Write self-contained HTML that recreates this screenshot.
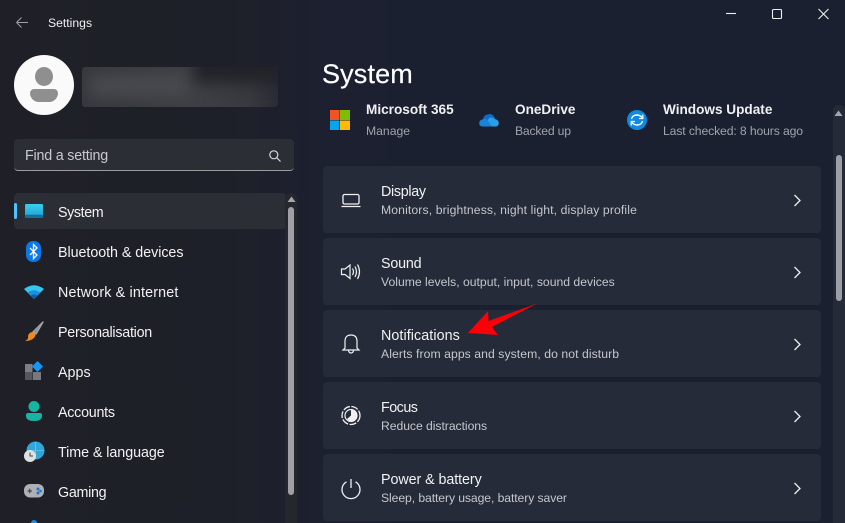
<!DOCTYPE html>
<html><head><meta charset="utf-8"><style>
html,body{margin:0;padding:0}
body{width:845px;height:523px;overflow:hidden;position:relative;background:#1b2030;font-family:"Liberation Sans",sans-serif;color:#fff}
.a{position:absolute}
.t{position:absolute;white-space:nowrap;line-height:18px}
.left{left:0;top:0;width:420px;height:523px;background:linear-gradient(90deg,#1f2027 0,#1e2029 55%,#1c2030 78%,#1b2030 100%)}
.card{position:absolute;left:323px;width:498px;height:67px;background:#262b39;border-radius:4px}
.nav{font-size:14.3px;left:58px;color:#f2f2f2}
.h{font-size:14.3px;left:381px;color:#f2f2f2}
.s{font-size:12.2px;left:381px;color:#c4c6cc}
.qh{font-size:13.6px;font-weight:bold;color:#f0f0f2}
.qs{font-size:12.2px;color:#a0a3ab}
svg{position:absolute;overflow:visible}
</style></head><body>
<div class="a left"></div>

<svg style="left:14px;top:14px" width="16" height="16" fill="none" stroke="#a0a1a5" stroke-width="1"><path d="M2.500 8.500H14M2.500 8.500L7.500 3.500M2.500 8.500L7.500 13.500"/></svg>
<div class="t" style="left:48px;top:14px;font-size:12.2px;color:#f0f0f0">Settings</div>

<svg style="left:720px;top:0" width="125" height="30" fill="none" stroke="#eee" stroke-width="1.100"><path d="M6 13.500H16"/><rect x="52.500" y="9.500" width="9" height="9" rx="1"/><path d="M98.500 9L108.500 19M108.500 9L98.500 19"/></svg>

<div class="a" style="left:14px;top:55px;width:60px;height:60px;border-radius:50%;background:#fafafa"></div>
<div class="a" style="left:35px;top:67px;width:18px;height:19px;border-radius:50%;background:#8f8f8f"></div>
<div class="a" style="left:30px;top:89px;width:28px;height:13px;border-radius:6px 6px 13px 13px;background:#8f8f8f"></div>
<div class="a" style="left:82px;top:67px;width:196px;height:40px;border-radius:3px;background:linear-gradient(90deg,#37383d 0,#3e3f44 60%,#38393f 85%,#2a2c35 100%);overflow:hidden">
  <div class="a" style="left:8px;top:8px;width:100px;height:22px;background:#48494e;filter:blur(7px)"></div>
  <div class="a" style="left:112px;top:-16px;width:110px;height:32px;background:#212329;filter:blur(7px)"></div>
</div>

<div class="a" style="left:14px;top:139px;width:280px;height:31px;background:#2c2e36;border-radius:4px;border-bottom:1.500px solid #9b9ca0"></div>
<div class="t" style="left:25px;top:147px;font-size:14.3px;color:#c9cacd;letter-spacing:-.2px">Find a setting</div>
<svg style="left:269px;top:150px" width="14" height="14" fill="none" stroke="#d8d8d8" stroke-width="1.200"><circle cx="4.800" cy="4.800" r="4"/><path d="M7.800 7.800L11.500 11.500"/></svg>

<div class="a" style="left:14px;top:193px;width:272px;height:36px;background:#2c2e36;border-radius:4px"></div>
<div class="a" style="left:14px;top:203px;width:3px;height:16px;background:#4cc2ff;border-radius:2px"></div>

<div class="a" style="left:285px;top:193px;width:12px;height:330px;background:#25272e;border-radius:6px 6px 0 0"></div>
<svg style="left:287px;top:196px" width="9" height="7"><path d="M4.500 .5L8.500 6H.5Z" fill="#a5a6aa"/></svg>
<div class="a" style="left:288px;top:207px;width:6px;height:288px;background:#9f9fa4;border-radius:3px"></div>

<svg style="left:25px;top:204px" width="18" height="14"><defs><linearGradient id="g1" x1="0" y1="0" x2="0" y2="1"><stop offset="0" stop-color="#3ad0ea"/><stop offset="1" stop-color="#1d9dd6"/></linearGradient></defs><rect width="18" height="14" rx="1.500" fill="url(#g1)"/><rect y="10.800" width="18" height="3.200" rx="1" fill="#0f6f9f"/></svg>
<div class="t nav" style="top:204px;letter-spacing:-.4px">System</div>

<svg style="left:26px;top:241px" width="15" height="21"><rect width="15" height="21" rx="7" fill="#0b78e8"/><path d="M4 7L11 14L7.500 17.500V3.500L11 7L4 14" fill="none" stroke="#fff" stroke-width="1.300"/></svg>
<div class="t nav" style="top:244px;letter-spacing:-.05px">Bluetooth &amp; devices</div>

<svg style="left:24px;top:284px" width="20" height="15"><path d="M0 5Q10 -2.500 20 5L10 15Z" fill="#36c5f0"/><path d="M4 8.500Q10 4 16 8.500L10 15Z" fill="#1b8fdc"/><path d="M7 11.500Q10 9.500 13 11.500L10 15Z" fill="#0b5fb8"/></svg>
<div class="t nav" style="top:284px;letter-spacing:.16px">Network &amp; internet</div>

<svg style="left:24px;top:321px" width="20" height="21"><path d="M19 1L12 13L9 11Z" fill="#8a8d92" stroke="#a0a2a6" stroke-width="1.500" stroke-linejoin="round"/><path d="M8 11Q11 12 11.500 14.500Q9 20 1 20Q5 18 4 15Q4.500 12 8 11Z" fill="#ee8a25"/></svg>
<div class="t nav" style="top:324px;letter-spacing:-.25px">Personalisation</div>

<svg style="left:25px;top:361px" width="18" height="19"><rect x="0" y="3" width="7.500" height="8" fill="#7d7f84"/><rect x="0" y="11" width="7.500" height="8" fill="#55575c"/><rect x="8" y="11" width="8" height="8" fill="#77797e"/><path d="M12.500 0L18 5.500L12.500 11L7 5.500Z" fill="#1a94ef"/></svg>
<div class="t nav" style="top:364px">Apps</div>

<svg style="left:26px;top:401px" width="16" height="21"><circle cx="8" cy="5.500" r="5.500" fill="#17b3a3"/><path d="M0 14Q0 12 2 12H14Q16 12 16 14V15Q16 20 8 20Q0 20 0 15Z" fill="#17b3a3"/></svg>
<div class="t nav" style="top:404px;letter-spacing:-.25px">Accounts</div>

<svg style="left:24px;top:441px" width="21" height="21"><circle cx="11.500" cy="9.500" r="9" fill="#2fa7dd"/><path d="M11.500 1V18M3 9.500H20" stroke="#7fd0ee" stroke-width=".6"/><circle cx="6" cy="15" r="6" fill="#dfe0e2"/><path d="M6 11.500V15H9" fill="none" stroke="#444" stroke-width="1"/></svg>
<div class="t nav" style="top:444px;letter-spacing:-.06px">Time &amp; language</div>

<svg style="left:24px;top:484px" width="20" height="14"><rect width="20" height="13.500" rx="6" fill="#aeb0b5"/><path d="M3.500 7H8M5.750 4.800V9.200" stroke="#333" stroke-width="1"/><circle cx="14" cy="5" r="1.500" fill="#1b74d0"/><circle cx="14" cy="9" r="1.500" fill="#1b74d0"/><circle cx="16.500" cy="7" r="1.300" fill="#1b74d0"/></svg>
<div class="t nav" style="top:484px;letter-spacing:-.3px">Gaming</div>

<div class="a" style="left:31px;top:520px;width:6px;height:3px;background:#1b8fdc;border-radius:3px 3px 0 0"></div>

<div class="t" style="left:322px;top:58px;font-size:27px;line-height:32px;color:#fff;letter-spacing:.15px;-webkit-text-stroke:.2px #fff">System</div>

<svg style="left:330px;top:110px" width="20" height="20"><rect width="9.500" height="10" fill="#f25325"/><rect x="10" width="10" height="10" fill="#81bb05"/><rect y="10.500" width="9.500" height="9.500" fill="#05a5f0"/><rect x="10" y="10.500" width="10" height="9.500" fill="#ffba08"/></svg>
<div class="t qh" style="left:366px;top:101px">Microsoft 365</div>
<div class="t qs" style="left:366px;top:122px">Manage</div>

<svg style="left:479px;top:113px" width="20" height="14" viewBox="0 0 20 14"><path d="M4 6Q5 2 8.500 1.500Q12 0 14.500 3Q16 4.500 16 6L8 10L3.500 7Z" fill="#0c6cc8"/><path d="M10 5Q13.500 3.500 15.500 6Q19.500 6.500 19.800 10Q19.800 13.500 16.500 13.500H7L9 7Z" fill="#2a9fe8"/><path d="M3.500 6.500Q6 5 8 6.500L13 13.500H3.500Q.2 13.500 .2 10Q.4 7 3.500 6.500Z" fill="#1a84d8"/></svg>
<div class="t qh" style="left:515px;top:101px">OneDrive</div>
<div class="t qs" style="left:515px;top:122px;letter-spacing:-.2px">Backed up</div>

<svg style="left:627px;top:110px" width="20" height="20" fill="none"><circle cx="10" cy="10" r="10" fill="#0f8ae0"/><path d="M4.500 9Q5.500 5 10 5Q13 5 15 7.500M15.500 11Q14.500 15 10 15Q7 15 5 12.500" stroke="#fff" stroke-width="1.400"/><path d="M15.800 4.500V8.500H12M4.200 15.500V11.500H8" stroke="#fff" stroke-width="1.200"/></svg>
<div class="t qh" style="left:663px;top:101px">Windows Update</div>
<div class="t qs" style="left:663px;top:122px;letter-spacing:-.12px">Last checked: 8 hours ago</div>

<div class="a" style="left:833px;top:105px;width:12px;height:418px;background:#252a38;border-radius:5px 5px 0 0"></div>
<svg style="left:834px;top:110px" width="9" height="7"><path d="M4.500 .5L8.500 6H.5Z" fill="#a5a7ad"/></svg>
<div class="a" style="left:836px;top:155px;width:6px;height:146px;background:#9c9ea5;border-radius:3px"></div>

<div class="card" style="top:166px"></div>
<div class="card" style="top:238px"></div>
<div class="card" style="top:310px"></div>
<div class="card" style="top:382px"></div>
<div class="card" style="top:454px"></div>

<svg style="left:341px;top:193px" width="20" height="15" fill="none" stroke="#f0f0f2" stroke-width="1.300"><rect x="2" y="1.500" width="16" height="9.500" rx="1.500"/><path d="M0.500 13.500H19.500"/></svg>
<div class="t h" style="top:183px;letter-spacing:-.3px">Display</div>
<div class="t s" style="top:201px;letter-spacing:.12px">Monitors, brightness, night light, display profile</div>

<svg style="left:341px;top:263px" width="20" height="18" fill="none" stroke="#f0f0f2" stroke-width="1.200"><path d="M0.500 6H4L9 2V15.500L4 11.500H0.500Z"/><path d="M11.500 5.500Q13.500 8.800 11.500 12M14 3.500Q17 8.800 14 14M16.500 1.500Q20.500 8.800 16.500 16"/></svg>
<div class="t h" style="top:255px;letter-spacing:-.2px">Sound</div>
<div class="t s" style="top:273px">Volume levels, output, input, sound devices</div>

<svg style="left:342px;top:334px" width="18" height="20" fill="none" stroke="#f0f0f2" stroke-width="1.200"><path d="M3 14V7.500Q3 1 9 1Q15 1 15 7.500V14L17 16H1Z"/><path d="M6.500 16.500Q7 19 9 19Q11 19 11.500 16.500"/></svg>
<div class="t h" style="top:327px;letter-spacing:.08px">Notifications</div>
<div class="t s" style="top:345px;letter-spacing:.07px">Alerts from apps and system, do not disturb</div>

<svg style="left:341px;top:405px" width="20" height="21" fill="none"><circle cx="10" cy="10.500" r="9" stroke="#f0f0f2" stroke-width="1.300" stroke-dasharray="7 1.500"/><circle cx="10" cy="10.500" r="6" stroke="#f0f0f2" stroke-width="1.200"/><path d="M10 4.500A6 6 0 0 1 10 16.500A7 7 0 0 1 6 14L10 10.500Z" fill="#f0f0f2"/></svg>
<div class="t h" style="top:399px;letter-spacing:-.5px">Focus</div>
<div class="t s" style="top:417px;letter-spacing:-.05px">Reduce distractions</div>

<svg style="left:341px;top:478px" width="20" height="21" fill="none" stroke="#f0f0f2" stroke-width="1.300"><path d="M10 1V10"/><path d="M5.500 3.800A9 9 0 1 0 14.500 3.800"/></svg>
<div class="t h" style="top:471px;letter-spacing:-.07px">Power &amp; battery</div>
<div class="t s" style="top:489px;letter-spacing:-.09px">Sleep, battery usage, battery saver</div>

<svg style="left:793px;top:194px" width="9" height="13" fill="none" stroke="#eee" stroke-width="1.300"><path d="M1.500 1L7 6.500L1.500 12"/></svg>
<svg style="left:793px;top:266px" width="9" height="13" fill="none" stroke="#eee" stroke-width="1.300"><path d="M1.500 1L7 6.500L1.500 12"/></svg>
<svg style="left:793px;top:338px" width="9" height="13" fill="none" stroke="#eee" stroke-width="1.300"><path d="M1.500 1L7 6.500L1.500 12"/></svg>
<svg style="left:793px;top:410px" width="9" height="13" fill="none" stroke="#eee" stroke-width="1.300"><path d="M1.500 1L7 6.500L1.500 12"/></svg>
<svg style="left:793px;top:482px" width="9" height="13" fill="none" stroke="#eee" stroke-width="1.300"><path d="M1.500 1L7 6.500L1.500 12"/></svg>

<svg style="left:0;top:0" width="845" height="523"><path d="M468 333L488 311L488.500 321L537 303.500L492 327L498 335Z" fill="#fb0007"/></svg>
</body></html>
